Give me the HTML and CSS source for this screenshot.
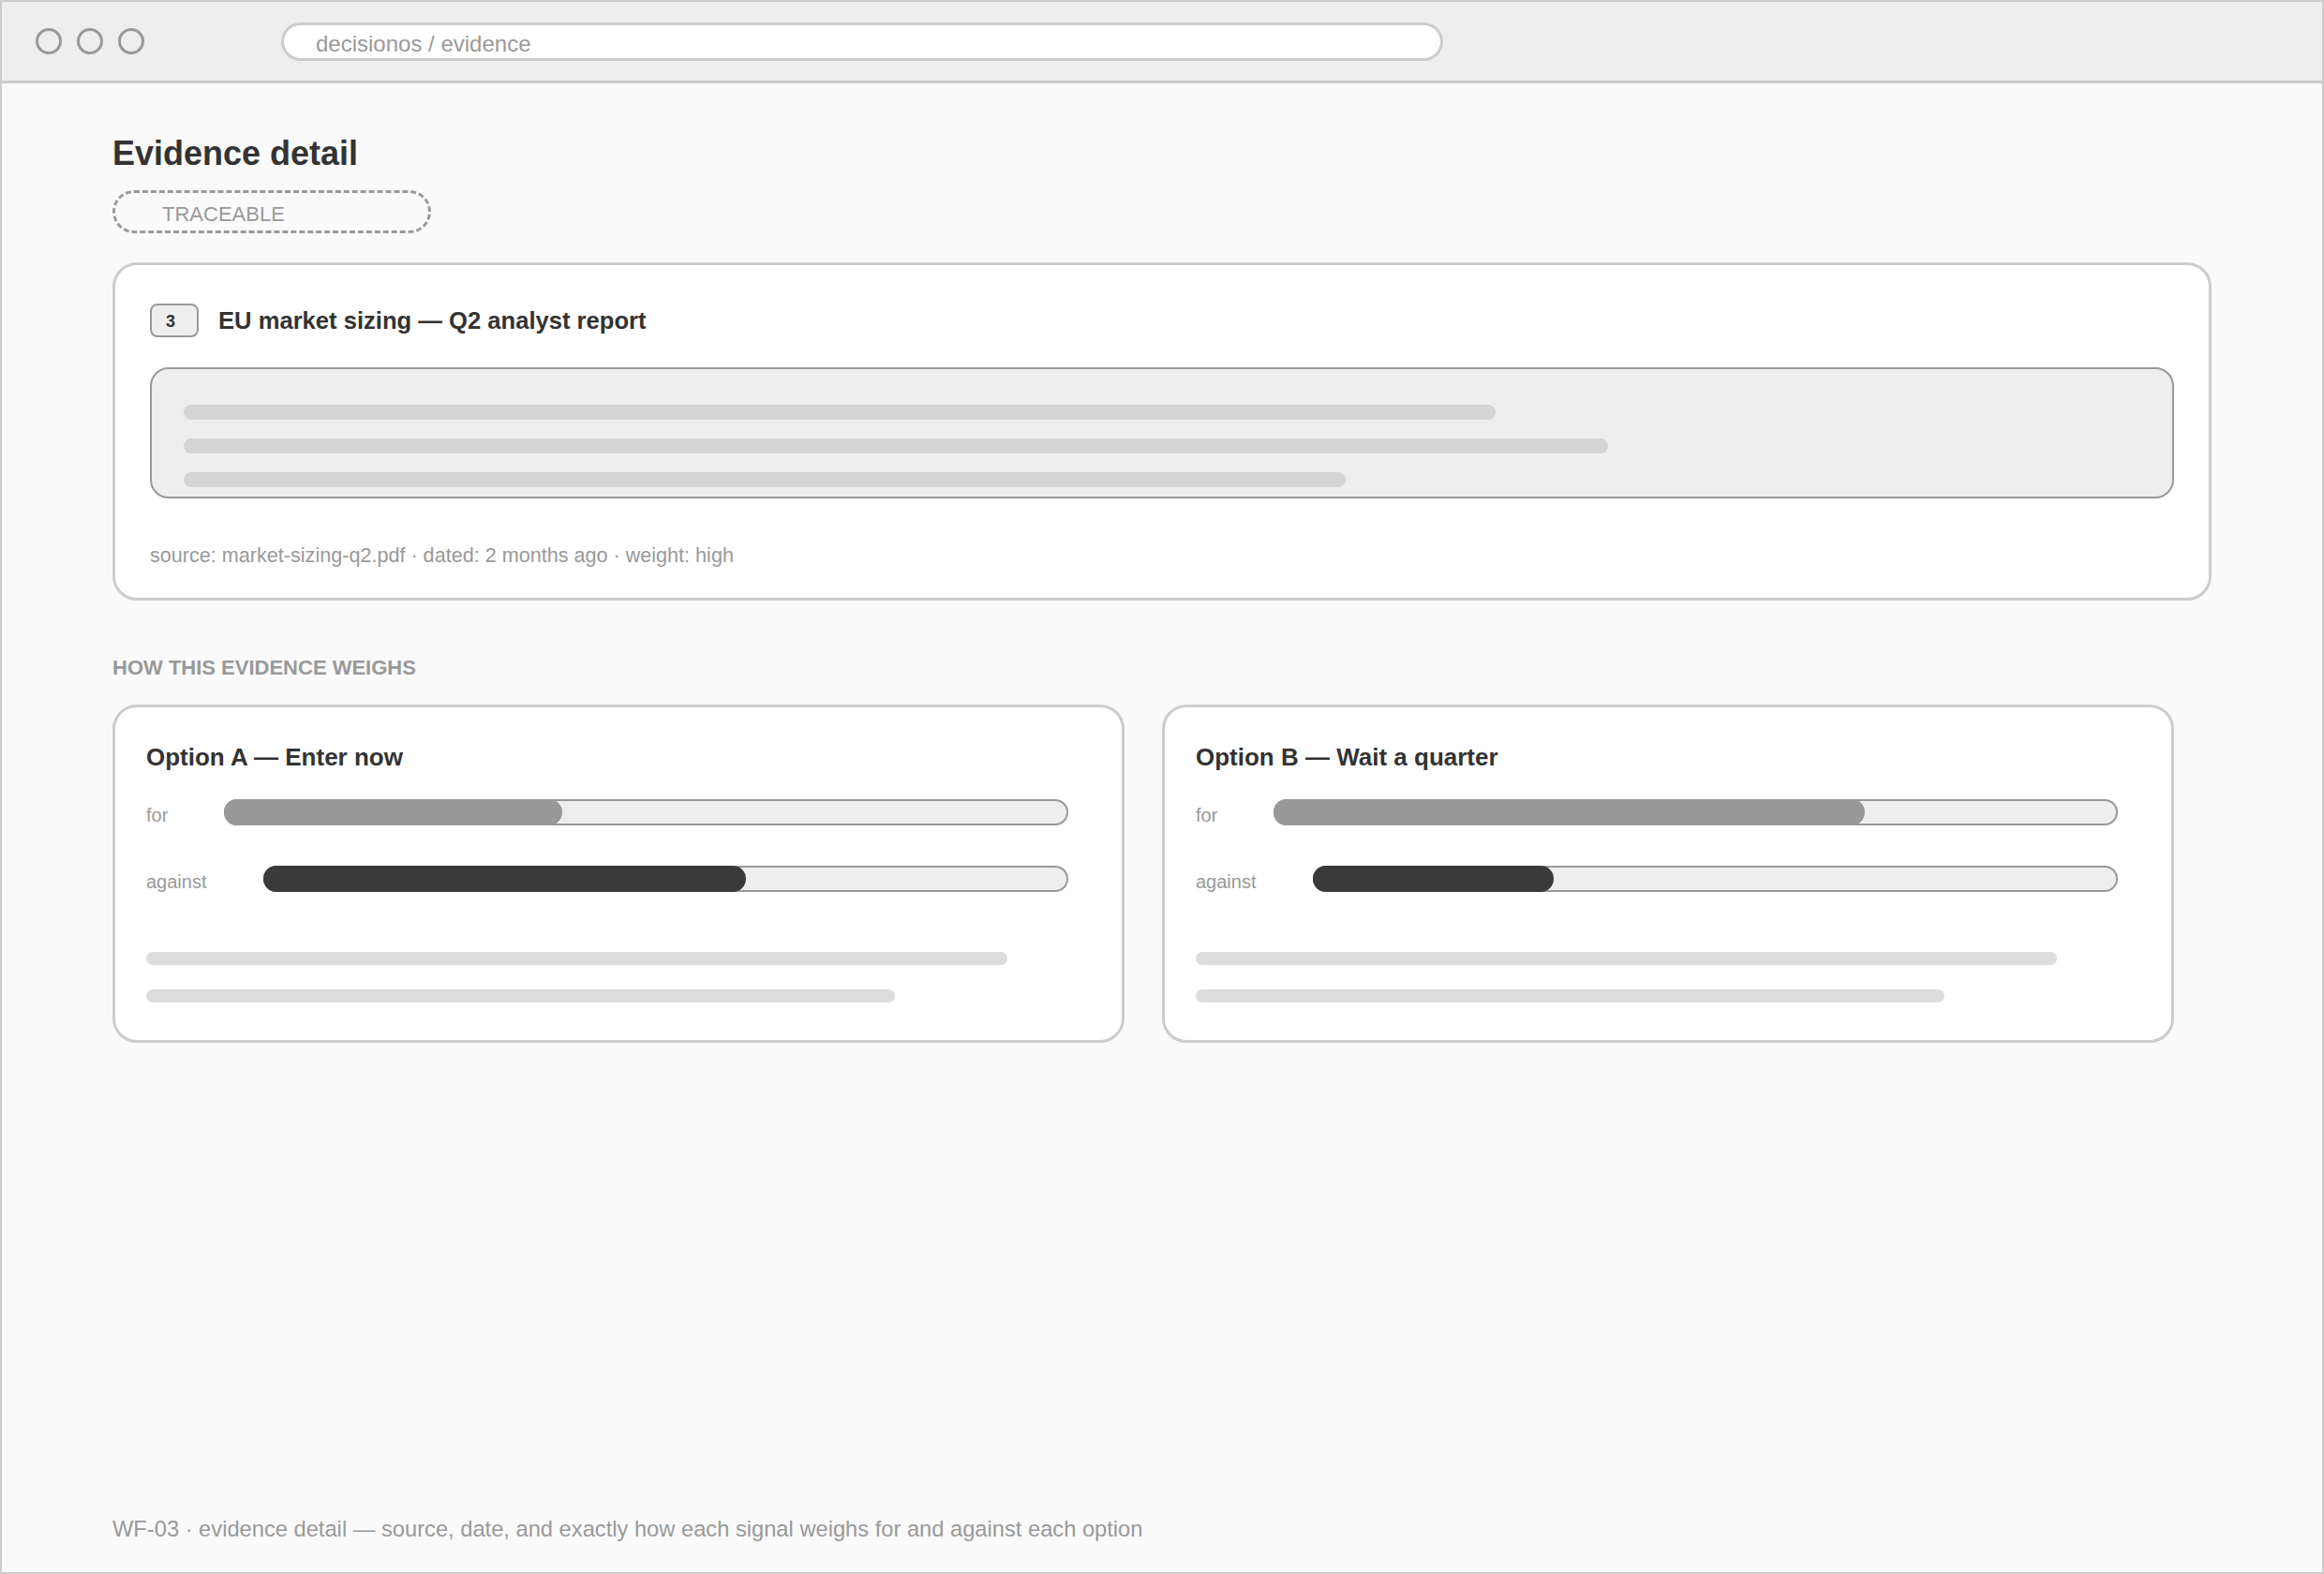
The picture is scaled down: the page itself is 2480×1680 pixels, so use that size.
FILE: index.html
```html
<!DOCTYPE html>
<html>

<head>
    <title>decisionos / evidence</title>
    <link rel="stylesheet" href="styles.css">
</head>

<body>
    <div class="window">
        <!-- browser chrome -->
        <div class="chrome">
            <div class="dots">
                <span class="dot"></span>
                <span class="dot"></span>
                <span class="dot"></span>
            </div>
            <div class="address">decisionos / evidence</div>
        </div>

        <div class="content">
            <h1 class="title">Evidence detail</h1>
            <div class="pill">TRACEABLE</div>

            <!-- the evidence item itself -->
            <div class="card evidence">
                <div class="evidence-head">
                    <span class="badge">3</span>
                    <span class="evidence-name">EU market sizing — Q2 analyst report</span>
                </div>
                <div class="excerpt">
                    <div class="line" style="width: 1400px"></div>
                    <div class="line" style="width: 1520px"></div>
                    <div class="line" style="width: 1240px"></div>
                </div>
                <div class="meta">source: market-sizing-q2.pdf · dated: 2 months ago · weight: high</div>
            </div>

            <div class="section-label">HOW THIS EVIDENCE WEIGHS</div>

            <div class="options">
                <div class="card option">
                    <div class="option-name">Option A — Enter now</div>
                    <div class="weigh">
                        <span class="weigh-label">for</span>
                        <div class="track"><div class="fill fill-for" style="width: 40%"></div></div>
                    </div>
                    <div class="weigh">
                        <span class="weigh-label">against</span>
                        <div class="track"><div class="fill fill-against" style="width: 60%"></div></div>
                    </div>
                    <div class="notes">
                        <div class="note" style="width: 919px"></div>
                        <div class="note" style="width: 799px"></div>
                    </div>
                </div>

                <div class="card option">
                    <div class="option-name">Option B — Wait a quarter</div>
                    <div class="weigh">
                        <span class="weigh-label">for</span>
                        <div class="track"><div class="fill fill-for" style="width: 70%"></div></div>
                    </div>
                    <div class="weigh">
                        <span class="weigh-label">against</span>
                        <div class="track"><div class="fill fill-against" style="width: 30%"></div></div>
                    </div>
                    <div class="notes">
                        <div class="note" style="width: 919px"></div>
                        <div class="note" style="width: 799px"></div>
                    </div>
                </div>
            </div>
        </div>

        <div class="footer">WF-03 · evidence detail — source, date, and exactly how each signal weighs for and against each option</div>
    </div>
</body>

</html>
```
FILE: styles.css
```css
body {
    margin: 0;
    font-family: "Liberation Sans", Arial, sans-serif;
    color: #333;
}

.window {
    height: 1680px;
    box-sizing: border-box;
    border: 2px solid #ccc;
    background-color: #fafafa;
    display: flex;
    flex-direction: column;
}

/* top bar */
.chrome {
    height: 84px;
    background-color: #eee;
    border-bottom: 3px solid #ccc;
    display: flex;
    align-items: center;
    padding-left: 36px;
}

.dots {
    display: flex;
    gap: 16px;
}

.dot {
    width: 28px;
    height: 28px;
    box-sizing: border-box;
    border: 3.5px solid #999;
    border-radius: 50%;
}

.address {
    margin-left: 146px;
    width: 1240px;
    height: 41px;
    box-sizing: border-box;
    border: 3px solid #ccc;
    border-radius: 21px;
    background-color: #fff;
    padding: 2px 0 0 34px;
    font-size: 24px;
    line-height: 35px;
    color: #999;
}

.content {
    padding: 53px 0 0 118px;
}

.title {
    margin: 0;
    font-size: 36px;
    line-height: 44px;
    font-weight: bold;
}

.pill {
    margin-top: 17px;
    width: 340px;
    height: 46px;
    box-sizing: border-box;
    border: 3px dashed #999;
    border-radius: 23px;
    padding-left: 50px;
    font-size: 22px;
    line-height: 45px;
    color: #999;
}

.card {
    box-sizing: border-box;
    background-color: #fff;
    border: 3px solid #ccc;
    border-radius: 26px;
}

.evidence {
    margin-top: 31px;
    width: 2240px;
    height: 361px;
    padding: 41px 37px 0;
}

.evidence-head {
    display: flex;
    align-items: center;
    gap: 21px;
    height: 36px;
}

.badge {
    width: 52px;
    height: 36px;
    box-sizing: border-box;
    border: 2px solid #999;
    border-radius: 8px;
    background-color: #eee;
    padding-left: 15px;
    font-size: 18px;
    line-height: 34px;
    font-weight: bold;
}

.evidence-name {
    font-size: 25.6px;
    line-height: 36px;
    font-weight: bold;
}

.excerpt {
    margin-top: 32px;
    height: 140px;
    box-sizing: border-box;
    border: 2px solid #999;
    border-radius: 20px;
    background-color: #eee;
    padding: 38px 34px 0;
    display: flex;
    flex-direction: column;
    gap: 20px;
}

.line {
    height: 16px;
    border-radius: 8px;
    background-color: #d4d4d4;
}

.meta {
    margin-top: 48px;
    font-size: 21.6px;
    line-height: 26px;
    color: #999;
}

.section-label {
    margin-top: 59px;
    font-size: 22px;
    line-height: 26px;
    font-weight: bold;
    color: #999;
}

.options {
    margin-top: 26px;
    width: 2200px;
    display: grid;
    grid-template-columns: 1fr 1fr;
    gap: 40px;
}

.option {
    height: 361px;
    padding: 38px 33px 0;
}

.option-name {
    font-size: 26px;
    line-height: 30px;
    font-weight: bold;
}

/* for / against bars */
.weigh {
    display: flex;
    align-items: center;
    gap: 60px;
    height: 28px;
    margin-top: 43px;
    margin-right: 24px;
}

.option-name + .weigh {
    margin-top: 30px;
}

.weigh-label {
    padding-top: 6px;
    font-size: 20px;
    color: #999;
}

.track {
    flex: 1;
    height: 28px;
    border-radius: 14px;
    background-color: #eee;
    box-shadow: inset 0 0 0 2px #999;
}

.fill {
    height: 100%;
    border-radius: 14px;
}

.fill-for {
    background-color: #999;
}

.fill-against {
    background-color: #3a3a3a;
}

.notes {
    margin-top: 64px;
    display: flex;
    flex-direction: column;
    gap: 26px;
}

.note {
    height: 14px;
    border-radius: 7px;
    background-color: #ddd;
}

.footer {
    margin-top: auto;
    padding: 0 0 32px 118px;
    font-size: 23.7px;
    line-height: 28px;
    color: #999;
}
```
